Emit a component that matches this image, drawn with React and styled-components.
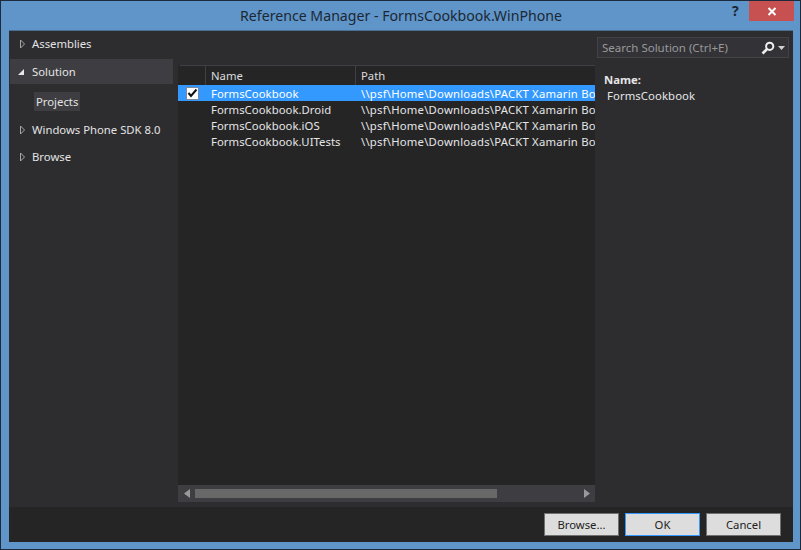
import React from 'react';
import styled, { createGlobalStyle } from 'styled-components';

const Global = createGlobalStyle`
  html, body { margin: 0; padding: 0; background: #5f95c9; }
  * { box-sizing: border-box; }
`;
const FONT = `"Noto Sans", "Open Sans", sans-serif`;

const Frame = styled.div`
  width: 801px; height: 550px; background: #5f95c9;
  border: 1px solid #1b2a3c;
  padding: 0 7px 7px 8px; display: flex; flex-direction: column;
  font-family: ${FONT}; font-size: 11.3px; color: #e6e6e6;
`;
const TitleBar = styled.div`
  height: 29px; flex: none; display: grid; grid-template-columns: 1fr auto 1fr; align-items: start;
`;
const Title = styled.div`
  font-size: 14.15px; line-height: 30px; color: #1c2733; white-space: nowrap; grid-column: 2;
`;
const WindowButtons = styled.div`
  grid-column: 3; justify-self: end; display: flex; align-items: flex-start; margin-right: -1px;
`;
const Help = styled.div`
  width: 20px; padding-left: 3px; font-weight: 700; font-size: 14px; line-height: 20px; color: #1c2733; text-align: left;
`;
const Close = styled.div`
  width: 45px; height: 20px; background: #c75050; display: flex; align-items: center; justify-content: center;
`;
const Body = styled.div`
  flex: 1; min-height: 0; display: flex; flex-direction: column; background: #2d2d30;
  border-top: 1px solid #4a6f96;
`;
const Main = styled.div`
  flex: 1; min-height: 0; display: grid; grid-template-columns: 169px 417px 1fr; padding-bottom: 5px;
`;
const Nav = styled.div`
  padding: 0 5px 0 1px; display: flex; flex-direction: column;
`;
const NavRow = styled.div`
  height: 25px; display: flex; align-items: center; padding-left: 9px; gap: 5px; margin-bottom: ${p => p.$gap || 2}px;
  background: ${p => (p.$active ? '#3e3e42' : 'transparent')}; color: #e3e3e3; white-space: nowrap; line-height: 26px;
`;
const Caret = styled.svg`
  width: 8px; height: 10px; flex: none; margin-left: ${p => p.$shift || 0}px; margin-right: ${p => -(p.$shift || 0)}px;
`;
const SubItem = styled.div`
  align-self: flex-start; margin: 6px 0 6px 24px; height: 19px; padding: 0 2px; line-height: 19px;
  background: #3e3e42; color: #e3e3e3; white-space: nowrap;
`;
const Center = styled.div`
  display: flex; flex-direction: column; min-width: 0; overflow: hidden; background: #252526;
`;
const TableArea = styled.div`
  flex: 1; min-height: 0; overflow: hidden; background: #252526;
`;
const Spacer = styled.div`
  height: 34px; background: #2d2d30;
`;
const HeaderRow = styled.div`
  height: 20px; margin-left: 2px; display: grid; grid-template-columns: 26px 150px 1fr; border-top: 1px solid #3f3f46; background: #252526;
`;
const HeaderCell = styled.div`
  padding-left: ${p => (p.$first ? 0 : 5)}px; line-height: 19px; color: #dcdcdc; border-right: 1px solid #3f3f46; white-space: nowrap;
  &:last-child { border-right: 0; }
`;
const Row = styled.div`
  height: 16px; display: grid; grid-template-columns: 28px 150px 1fr; grid-template-rows: 16px; line-height: 18px; white-space: nowrap;
  background: ${p => (p.$selected ? '#3399ff' : 'transparent')}; color: ${p => (p.$selected ? '#ffffff' : '#e6e6e6')};
`;
const CheckCell = styled.div`
  display: flex; align-items: center; justify-content: center; padding-left: 1px;
`;
const Check = styled.div`
  width: 13px; height: 13px; background: #fff; border: 1px solid #7a8ba0; display: flex; align-items: center; justify-content: center;
`;
const NameCell = styled.div`padding-left: 5px; overflow: hidden; letter-spacing: 0.05px;`;
const PathCell = styled.div`padding-left: 5px; overflow: hidden; letter-spacing: 0.22px;`;
const ScrollBar = styled.div`
  height: 17px; flex: none; background: #3e3e42; display: flex; align-items: center; padding: 0 5px 0 6px;
`;
const Thumb = styled.div`
  width: 302px; height: 9px; background: #686868; margin-left: 5px;
`;
const Arrow = styled.svg`
  width: 6px; height: 9px; flex: none;
`;
const ScrollFill = styled.div`flex: 1;`;
const Details = styled.div`
  padding: 6px 4px 0 2px; display: flex; flex-direction: column;
`;
const Search = styled.div`
  height: 21px; border: 1px solid #434346; background: #333337; display: flex; align-items: center; padding-left: 4px; color: #999; font-size: 11.5px;
`;
const SearchText = styled.div`flex: 1; white-space: nowrap;`;
const SearchBtn = styled.div`
  width: 30px; height: 19px; display: flex; align-items: center; gap: 3px; padding-left: 3px; background: #333337;
`;
const DetailLabel = styled.div`
  font-weight: 700; margin: 14px 0 0 7px; line-height: 16px; color: #e6e6e6;
`;
const DetailValue = styled.div`
  margin-left: 10px; line-height: 16px; color: #e6e6e6; letter-spacing: 0.1px;
`;
const Footer = styled.div`
  height: 35px; flex: none; background: #252526; display: flex; justify-content: flex-end; align-items: flex-start; gap: 6px; padding: 6px 12px 0 0;
`;
const Btn = styled.div`
  width: 75px; height: 23px; background: #dddddd; color: #1e1e1e; text-align: center; line-height: 21px;
  border: 1px solid ${p => (p.$primary ? '#3399ff' : '#707070')};
`;

const CaretRight = () => (
  <Caret viewBox="0 0 8 10"><path d="M1.5 1 L5.5 5 L1.5 9 Z" fill="#2d2d30" stroke="#a8a8a8" strokeWidth="1" /></Caret>
);
const CaretDown = () => (
  <Caret $shift={-2} viewBox="0 0 8 10"><path d="M7 2 V8 H1 Z" fill="#e6e6e6" /></Caret>
);

const projects = ['FormsCookbook', 'FormsCookbook.Droid', 'FormsCookbook.iOS', 'FormsCookbook.UITests'];
const PATH = '\\\\psf\\Home\\Downloads\\PACKT Xamarin Bo';

export default function App() {
  return (
    <>
      <Global />
      <Frame>
        <TitleBar>
          <Title>Reference Manager - FormsCookbook.WinPhone</Title>
          <WindowButtons>
            <Help>?</Help>
            <Close>
              <svg width="10" height="9" viewBox="0 0 10 9"><path d="M1.5 1 L8.5 8 M8.5 1 L1.5 8" stroke="#fff" strokeWidth="2" /></svg>
            </Close>
          </WindowButtons>
        </TitleBar>
        <Body>
          <Main>
            <Nav>
              <NavRow $gap={3}><CaretRight />Assemblies</NavRow>
              <NavRow $active><CaretDown />Solution</NavRow>
              <SubItem>Projects</SubItem>
              <NavRow><CaretRight />Windows Phone SDK 8.0</NavRow>
              <NavRow><CaretRight />Browse</NavRow>
            </Nav>
            <Center>
              <Spacer />
              <HeaderRow>
                <HeaderCell $first />
                <HeaderCell>Name</HeaderCell>
                <HeaderCell>Path</HeaderCell>
              </HeaderRow>
              <TableArea>
                {projects.map((p, i) => (
                  <Row key={p} $selected={i === 0}>
                    <CheckCell>
                      {i === 0 && (
                        <Check>
                          <svg width="11" height="10" viewBox="0 0 11 10"><path d="M1.5 5 L4 8 L9.5 1.5" fill="none" stroke="#111" strokeWidth="2" /></svg>
                        </Check>
                      )}
                    </CheckCell>
                    <NameCell>{p}</NameCell>
                    <PathCell>{PATH}</PathCell>
                  </Row>
                ))}
              </TableArea>
              <ScrollBar>
                <Arrow viewBox="0 0 6 9"><path d="M6 0 V9 L0 4.5 Z" fill="#999" /></Arrow>
                <Thumb />
                <ScrollFill />
                <Arrow viewBox="0 0 6 9"><path d="M0 0 V9 L6 4.5 Z" fill="#999" /></Arrow>
              </ScrollBar>
            </Center>
            <Details>
              <Search>
                <SearchText>Search Solution (Ctrl+E)</SearchText>
                <SearchBtn>
                  <svg width="14" height="14" viewBox="0 0 14 14"><circle cx="8.7" cy="5.3" r="3.6" fill="none" stroke="#f0f0f0" strokeWidth="2" /><path d="M6 8 L1.5 12.5" stroke="#f0f0f0" strokeWidth="2.6" /></svg>
                  <svg width="7" height="4" viewBox="0 0 7 4"><path d="M0 0 H7 L3.5 4 Z" fill="#d0d0d0" /></svg>
                </SearchBtn>
              </Search>
              <DetailLabel>Name:</DetailLabel>
              <DetailValue>FormsCookbook</DetailValue>
            </Details>
          </Main>
          <Footer>
            <Btn>Browse...</Btn>
            <Btn $primary>OK</Btn>
            <Btn>Cancel</Btn>
          </Footer>
        </Body>
      </Frame>
    </>
  );
}
